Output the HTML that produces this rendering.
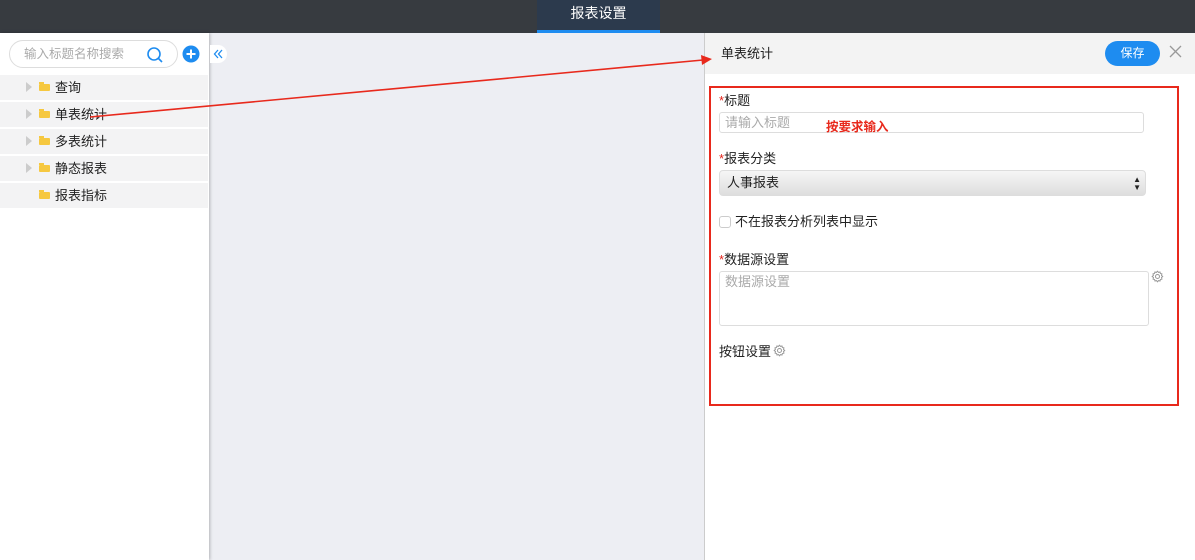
<!DOCTYPE html>
<html><head><meta charset="utf-8"><style>
*{margin:0;padding:0;box-sizing:border-box}
body{width:1195px;height:560px;position:relative;overflow:hidden;background:#edeef3;font-family:"Liberation Sans","Noto Sans CJK SC",sans-serif;font-size:13px;color:#222}
.top{position:absolute;left:0;top:0;width:1195px;height:33px;background:#373b40}
.tab{position:absolute;left:537px;top:0;width:123px;height:33px;background:#2c3a4d;color:#fff;font-size:14px;text-align:center;line-height:26px;border-bottom:3px solid #1e8cf0}
.left{position:absolute;left:0;top:33px;width:209px;height:527px;background:#fff;box-shadow:1px 0 3px rgba(0,0,0,.25)}
.search{position:absolute;left:9px;top:7px;width:169px;height:28px;border:1px solid #ddd;border-radius:14px;color:#aaa;padding-left:14px;line-height:26px;font-size:12.5px}
.row{position:absolute;left:0;width:208px;height:25px;background:#f3f3f4;line-height:25px;font-size:13px}
.tri{position:absolute;left:26px;top:7px;width:0;height:0;border-left:6px solid #ccc;border-top:5px solid transparent;border-bottom:5px solid transparent}
.fold{position:absolute;left:39px;top:9px;width:11px;height:7px;background:#f6c840;border-radius:1px}
.fold:before{content:"";position:absolute;left:0;top:-2px;width:5px;height:2px;background:#f6c840}
.row span{position:absolute;left:55px}
.right{position:absolute;left:704px;top:33px;width:491px;height:527px;background:#fff;border-left:1px solid #ccc}
.hdr{height:41px;background:#f3f3f3;position:relative}
.lbl{position:absolute;font-size:13px;line-height:16px}
.lbl b{color:#e2231a;font-weight:normal}
.inp{position:absolute;border:1px solid #ddd;border-radius:3px;color:#aaa;font-size:13px;padding-left:5px}
</style></head><body>
<div class="top"><div class="tab">报表设置</div></div>
<div class="left">
<div class="search">输入标题名称搜索</div>
<svg style="position:absolute;left:146px;top:13px" width="18" height="18" viewBox="0 0 18 18"><circle cx="8" cy="8" r="6" fill="none" stroke="#1e8cf0" stroke-width="1.6"/><path d="M12.5 12.5L16 16" stroke="#1e8cf0" stroke-width="1.6"/></svg>
<svg style="position:absolute;left:182px;top:12px" width="18" height="18"><circle cx="9" cy="9" r="8.5" fill="#1e8cf0"/><path d="M9 4.5v9M4.5 9h9" stroke="#fff" stroke-width="2"/></svg>
<div class="row" style="top:42px"><i class="tri"></i><i class="fold"></i><span>查询</span></div>
<div class="row" style="top:69px"><i class="tri"></i><i class="fold"></i><span>单表统计</span></div>
<div class="row" style="top:96px"><i class="tri"></i><i class="fold"></i><span>多表统计</span></div>
<div class="row" style="top:123px"><i class="tri"></i><i class="fold"></i><span>静态报表</span></div>
<div class="row" style="top:150px"><i class="fold"></i><span>报表指标</span></div>
</div>
<div style="position:absolute;left:210px;top:45px;width:17px;height:18px;background:#fff;border-radius:0 9px 9px 0"><svg width="17" height="18"><path d="M8 5L4.5 9L8 13M12 5L8.5 9L12 13" fill="none" stroke="#1e8cf0" stroke-width="1.3"/></svg></div>
<div class="right">
<div class="hdr"><div class="lbl" style="left:16px;top:13px">单表统计</div>
<div style="position:absolute;left:400px;top:8px;width:55px;height:25px;border-radius:13px;background:#1e8cf0;color:#fff;font-size:12px;text-align:center;line-height:25px">保存</div>
<svg style="position:absolute;left:464px;top:12px" width="13" height="13"><path d="M1 1L12 12M12 1L1 12" stroke="#999" stroke-width="1.3"/></svg></div>
<div style="position:absolute;left:4px;top:53px;width:470px;height:320px;border:2px solid #e8291c"></div>
<div class="lbl" style="left:14px;top:60px"><b>*</b>标题</div>
<div class="inp" style="left:14px;top:79px;width:425px;height:21px;line-height:19px">请输入标题</div>
<div style="position:absolute;left:121px;top:83px;color:#e8291c;font-size:12.5px;font-weight:bold">按要求输入</div>
<div class="lbl" style="left:14px;top:118px"><b>*</b>报表分类</div>
<div style="position:absolute;left:14px;top:137px;width:427px;height:26px;border-radius:4px;background:linear-gradient(#f6f6f6,#dedede);border:1px solid #ddd;line-height:24px;padding-left:7px;font-size:13px">人事报表<span style="position:absolute;right:4px;font-size:8px;line-height:8px;top:5px">▲<br>▼</span></div>
<div style="position:absolute;left:14px;top:183px;width:12px;height:12px;border:1px solid #ccc;border-radius:3px"></div>
<div class="lbl" style="left:30px;top:181px">不在报表分析列表中显示</div>
<div class="lbl" style="left:14px;top:219px"><b>*</b>数据源设置</div>
<div class="inp" style="left:14px;top:238px;width:430px;height:55px;padding-top:2px;line-height:16px">数据源设置</div>
<svg style="position:absolute;left:446px;top:237px" width="13" height="13" viewBox="0 0 13 13"><path d="M6.5 1.2l1 1.2 1.5-.4.4 1.5 1.5.4-.4 1.5 1.2 1.1-1.2 1.1.4 1.5-1.5.4-.4 1.5-1.5-.4-1 1.2-1-1.2-1.5.4-.4-1.5-1.5-.4.4-1.5L1.2 6.5l1.2-1.1L2 3.9l1.5-.4.4-1.5 1.5.4z" fill="none" stroke="#999"/><circle cx="6.5" cy="6.5" r="2" fill="none" stroke="#999"/></svg>
<div class="lbl" style="left:14px;top:311px">按钮设置</div>
<svg style="position:absolute;left:68px;top:311px" width="13" height="13" viewBox="0 0 13 13"><path d="M6.5 1.2l1 1.2 1.5-.4.4 1.5 1.5.4-.4 1.5 1.2 1.1-1.2 1.1.4 1.5-1.5.4-.4 1.5-1.5-.4-1 1.2-1-1.2-1.5.4-.4-1.5-1.5-.4.4-1.5L1.2 6.5l1.2-1.1L2 3.9l1.5-.4.4-1.5 1.5.4z" fill="none" stroke="#999"/><circle cx="6.5" cy="6.5" r="2" fill="none" stroke="#999"/></svg>
</div>
<svg style="position:absolute;left:0;top:0" width="1195" height="560"><path d="M90 117L703 60" stroke="#e8291c" stroke-width="1.6"/><path d="M712 59L701 55L702 65Z" fill="#e8291c"/></svg>
</body></html>
